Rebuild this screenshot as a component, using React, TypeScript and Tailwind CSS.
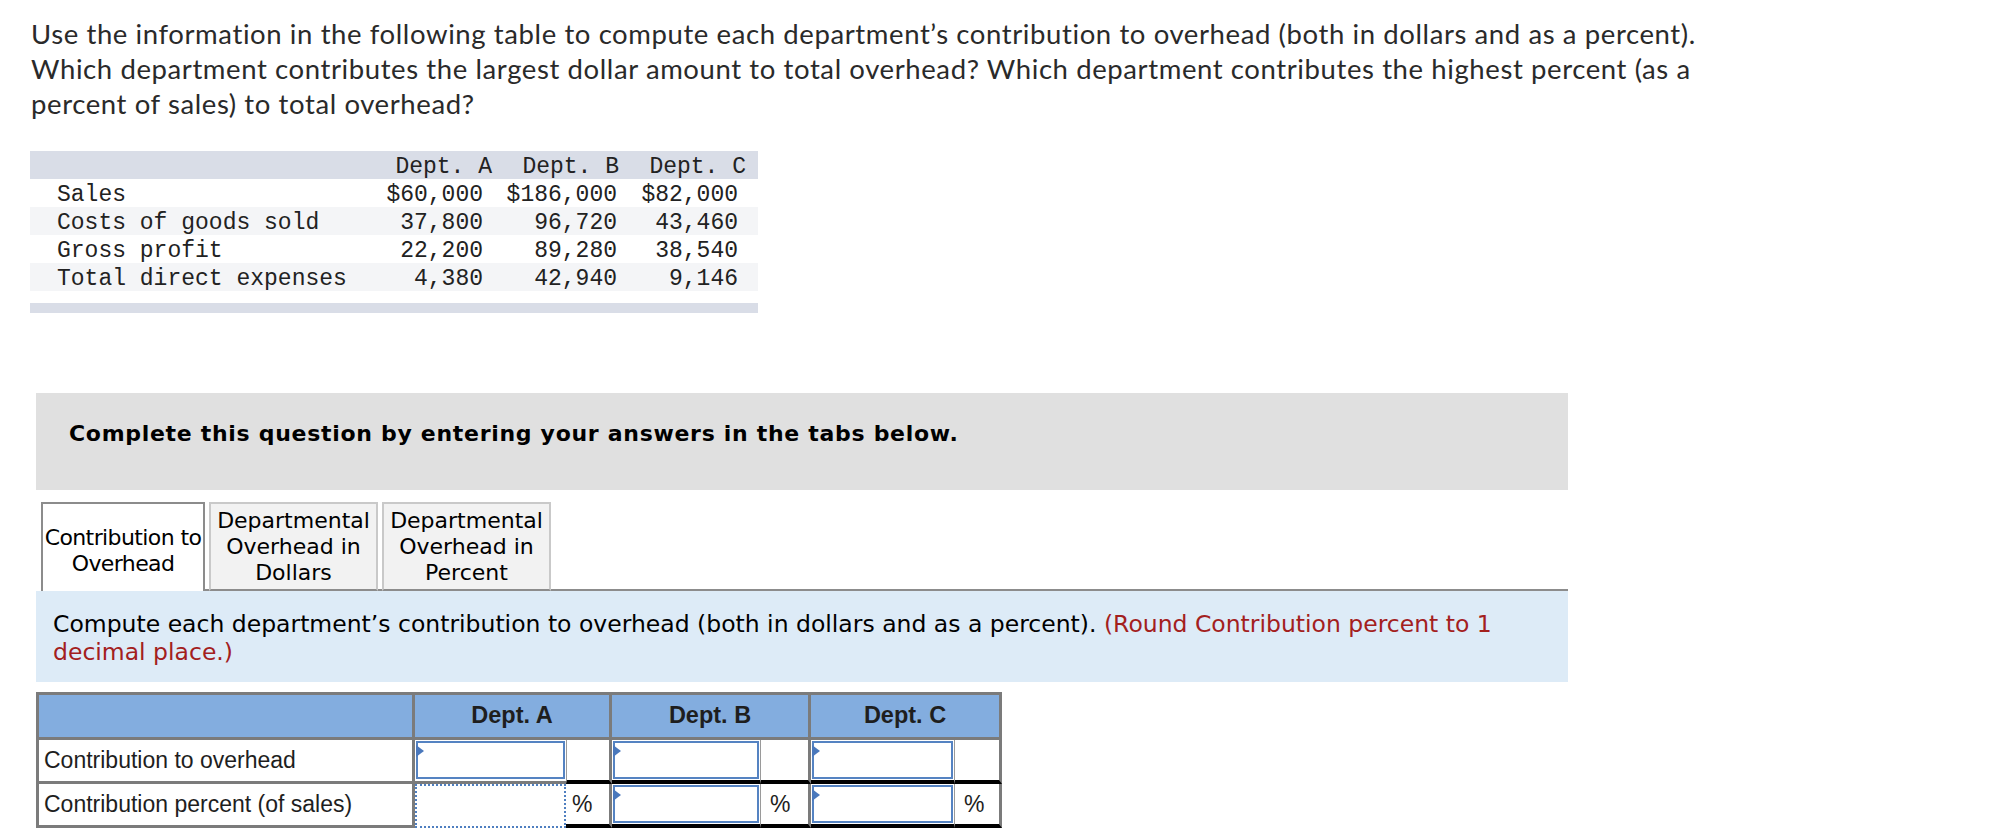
import React from 'react';

type DataRow = {
  label: string;
  a: string;
  b: string;
  c: string;
  shaded?: boolean;
};

const dataRows: DataRow[] = [
  { label: 'Sales', a: '$60,000', b: '$186,000', c: '$82,000' },
  { label: 'Costs of goods sold', a: '37,800', b: '96,720', c: '43,460', shaded: true },
  { label: 'Gross profit', a: '22,200', b: '89,280', c: '38,540' },
  { label: 'Total direct expenses', a: '4,380', b: '42,940', c: '9,146', shaded: true },
];

const mono = { fontFamily: '"Liberation Mono", "Courier New", monospace' };
const tahoma = { fontFamily: '"DejaVu Sans", Verdana, sans-serif' };
const arial = { fontFamily: '"Liberation Sans", Arial, sans-serif' };

const InfoTable: React.FC = () => (
  <div className="ml-[30px] mt-[30px] w-[728px] text-[23px] text-[#222]" style={mono}>
    <div className="flex h-[28px] items-center bg-[#d9dde7] pt-[4px] leading-none">
      <div className="w-[346px]" />
      <div className="w-[121px] pr-[5px] text-right">Dept. A</div>
      <div className="w-[130px] pr-[8px] text-right">Dept. B</div>
      <div className="w-[131px] pr-[12px] text-right">Dept. C</div>
    </div>
    {dataRows.map(row => (
      <div
        key={row.label}
        className={`flex h-[28px] items-center pt-[4px] leading-none ${row.shaded ? 'bg-[#f4f5f7]' : 'bg-white'}`}
      >
        <div className="w-[346px] whitespace-pre pl-[27px]">{row.label}</div>
        <div className="w-[121px] pr-[14px] text-right">{row.a}</div>
        <div className="w-[130px] pr-[10px] text-right">{row.b}</div>
        <div className="w-[131px] pr-[20px] text-right">{row.c}</div>
      </div>
    ))}
    <div className="mt-[12px] h-[10px] bg-[#d9dde7]" />
  </div>
);

const Tabs: React.FC = () => (
  <div className="mt-[12px] flex h-[89px] items-stretch text-[22px] leading-[26px] text-black" style={tahoma}>
    <div className="w-[5px]" />
    <div className="flex w-[164px] items-center justify-center whitespace-nowrap border-2 border-b-0 border-[#8c8c8c] bg-white pt-[6px] text-center tracking-[-0.6px]">
      Contribution to
      <br />
      Overhead
    </div>
    <div className="w-[4px] border-b-2 border-[#8c8c8c]" />
    <div className="flex w-[169px] items-center justify-center border-2 border-[#c9c9c9] border-b-[#8c8c8c] bg-[#f2f2f2] text-center">
      Departmental
      <br />
      Overhead in
      <br />
      Dollars
    </div>
    <div className="w-[4px] border-b-2 border-[#8c8c8c]" />
    <div className="flex w-[169px] items-center justify-center border-2 border-[#c9c9c9] border-b-[#8c8c8c] bg-[#f2f2f2] text-center">
      Departmental
      <br />
      Overhead in
      <br />
      Percent
    </div>
    <div className="flex-1 border-b-2 border-[#8c8c8c]" />
  </div>
);

const InputBox: React.FC<{ dotted?: boolean }> = ({ dotted }) =>
  dotted ? (
    <div className="h-full w-full border-2 border-dotted border-[#4f7fc0] bg-white" />
  ) : (
    <div className="relative h-full w-full border-2 border-[#5583c2] bg-white">
      <span className="absolute left-[-2px] top-[2px] h-0 w-0 border-y-[6px] border-l-[8px] border-y-transparent border-l-[#4a78bc]" />
    </div>
  );

const AnswerTable: React.FC = () => (
  <div className="mt-[10px] w-[966px] border-l-[3px] border-t-[3px] border-[#7b7b7b] text-[23px] text-[#1e1e1e]" style={arial}>
    <div className="flex h-[45px] bg-[#83addf] text-[23.5px] font-bold">
      <div className="w-[376px] border-b-[3px] border-r-[3px] border-[#7b7b7b]" />
      <div className="flex w-[197px] items-center justify-center border-b-[3px] border-r-[3px] border-[#7b7b7b]">Dept. A</div>
      <div className="flex w-[199px] items-center justify-center border-b-[3px] border-r-[3px] border-[#7b7b7b]">Dept. B</div>
      <div className="flex w-[191px] items-center justify-center border-b-[3px] border-r-[3px] border-[#7b7b7b]">Dept. C</div>
    </div>

    <div className="flex h-[44px]">
      <div className="flex w-[376px] items-center border-b-[3px] border-r-[3px] border-[#7b7b7b] pl-[5px]">
        Contribution to overhead
      </div>
      <div className="w-[151px] border-b-[3px] border-[#7b7b7b] p-[1px] pb-[2px]">
        <InputBox />
      </div>
      <div className="w-[46px] border-b-4 border-l border-r-[3px] border-b-black border-l-[#9a9a9a] border-r-[#7b7b7b]" />
      <div className="w-[148px] border-b-4 border-b-black p-[1px]">
        <InputBox />
      </div>
      <div className="w-[51px] border-b-4 border-l border-r-[3px] border-b-black border-l-[#9a9a9a] border-r-[#7b7b7b]" />
      <div className="w-[143px] border-b-4 border-b-black p-[1px]">
        <InputBox />
      </div>
      <div className="w-[48px] border-b-4 border-l border-r-[3px] border-b-black border-l-[#9a9a9a] border-r-[#7b7b7b]" />
    </div>

    <div className="flex h-[44px]">
      <div className="flex w-[376px] items-center border-b-[3px] border-r-[3px] border-[#7b7b7b] pl-[5px]">
        Contribution percent (of sales)
      </div>
      <div className="w-[151px] p-0">
        <InputBox dotted />
      </div>
      <div className="flex w-[46px] items-center border-b-4 border-r-[3px] border-b-black border-r-[#7b7b7b] pl-[6px]">%</div>
      <div className="w-[148px] border-b-4 border-b-black p-[1px]">
        <InputBox />
      </div>
      <div className="flex w-[51px] items-center border-b-4 border-l border-r-[3px] border-b-black border-l-[#9a9a9a] border-r-[#7b7b7b] pl-[9px]">%</div>
      <div className="w-[143px] border-b-4 border-b-black p-[1px]">
        <InputBox />
      </div>
      <div className="flex w-[48px] items-center border-b-4 border-l border-r-[3px] border-b-black border-l-[#9a9a9a] border-r-[#7b7b7b] pl-[9px]">%</div>
    </div>
  </div>
);

export default function App() {
  return (
    <div className="h-[840px] w-[1996px] overflow-hidden bg-white">
      <p
        className="whitespace-nowrap pl-[31px] pt-[16px] text-[27.5px] leading-[35px] tracking-[0.6px] text-[#2a2a2a]"
        style={{ fontFamily: 'Lato, "Open Sans", sans-serif' }}
      >
        Use the information in the following table to compute each department’s contribution to overhead (both in dollars and as a percent).
        <br />
        Which department contributes the largest dollar amount to total overhead? Which department contributes the highest percent (as a
        <br />
        percent of sales) to total overhead?
      </p>

      <InfoTable />

      <div className="ml-[36px] mt-[80px] w-[1532px]">
        <div className="h-[97px] bg-[#e0e0e0] pl-[33px] pt-[27px]">
          <span className="text-[22px] font-bold leading-[28px] tracking-[0.7px] text-black" style={tahoma}>
            Complete this question by entering your answers in the tabs below.
          </span>
        </div>

        <Tabs />

        <div className="h-[91px] bg-[#ddebf7] pl-[17px] pt-[19px] text-[23.5px] leading-[28px] text-black" style={tahoma}>
          Compute each department’s contribution to overhead (both in dollars and as a percent).{' '}
          <span className="text-[#a3201d]">(Round Contribution percent to 1</span>
          <br />
          <span className="text-[#a3201d]">decimal place.)</span>
        </div>

        <AnswerTable />
      </div>
    </div>
  );
}
